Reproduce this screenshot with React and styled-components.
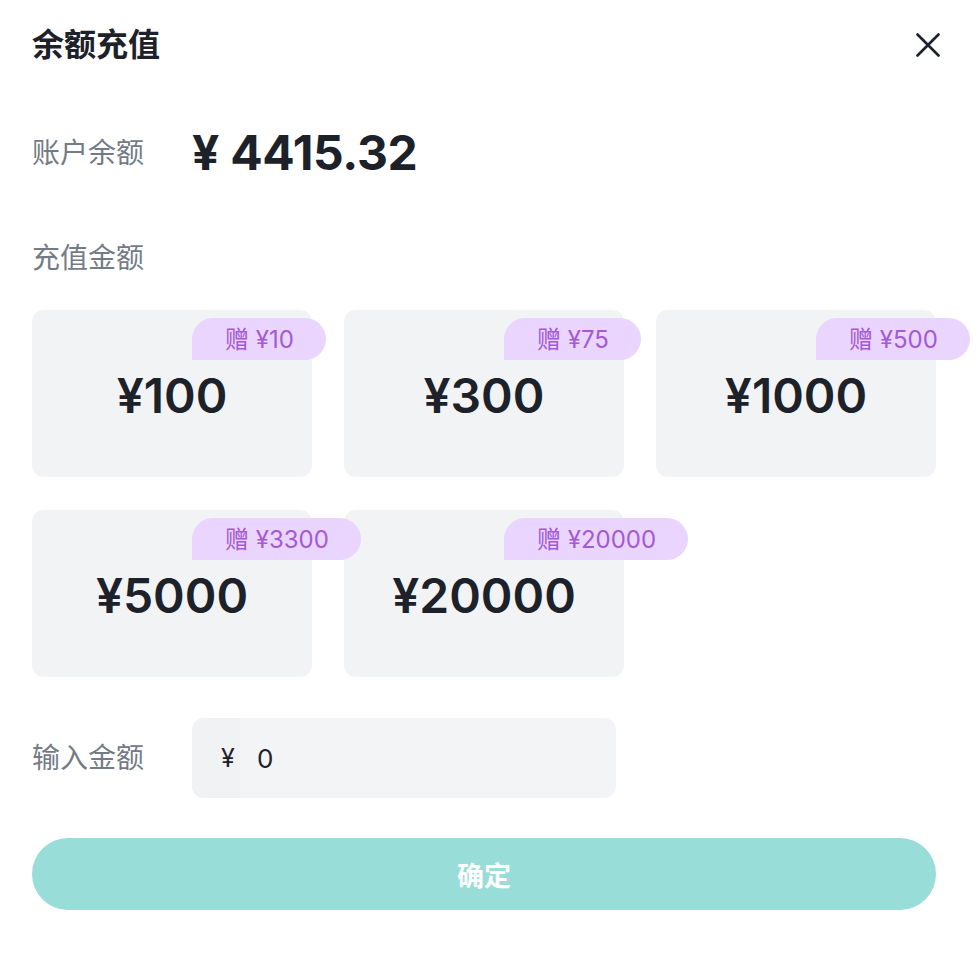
import React from "react";
import styled, { createGlobalStyle } from "styled-components";

const Global = createGlobalStyle`
  html, body { margin: 0; padding: 0; background: #ffffff; }
  body { font-family: Inter, "Noto Sans CJK SC", sans-serif; color: #1d2129; }
`;

const Dialog = styled.div`
  width: 978px;
  box-sizing: border-box;
  padding: 24px 42px 52px 32px;
  display: flex;
  flex-direction: column;
`;

const Header = styled.div`
  display: flex;
  align-items: center;
  justify-content: space-between;
  height: 42px;
`;

const Title = styled.h1`
  margin: 0;
  font-size: 32px;
  line-height: 42px;
  font-weight: 700;
  color: #1d2129;
`;

const CloseButton = styled.button`
  border: 0;
  background: none;
  padding: 0;
  width: 24px;
  height: 24px;
  margin-right: -4px;
  display: flex;
  cursor: pointer;
`;

const Row = styled.div`
  display: flex;
  align-items: center;
  margin-top: ${(p) => p.$mt}px;
  height: ${(p) => p.$h}px;
`;

const Label = styled.div`
  width: 160px;
  flex: none;
  font-size: 28px;
  line-height: 40px;
  color: #737b87;
`;

const Balance = styled.div`
  font-size: 48px;
  font-weight: 700;
  line-height: 60px;
  color: #1d2129;
  letter-spacing: -0.3px;
`;

const SectionLabel = styled(Label)`
  margin-top: 55px;
`;

const Grid = styled.div`
  display: grid;
  grid-template-columns: repeat(3, 280px);
  grid-auto-rows: 167px;
  column-gap: 32px;
  row-gap: 33px;
  margin-top: 32px;
`;

const Card = styled.div`
  position: relative;
  background: #f2f3f5;
  border-radius: 12px;
  display: flex;
  align-items: center;
  justify-content: center;
  padding-top: 4px;
  box-sizing: border-box;
`;

const Amount = styled.div`
  font-size: 48px;
  font-weight: 600;
  color: #1d2129;
`;

const Badge = styled.div`
  position: absolute;
  z-index: 1;
  left: 160px;
  top: 8px;
  height: 42px;
  padding: 2px 32px 0 33px;
  box-sizing: border-box;
  background: #ead5fe;
  color: #a35ad4;
  font-size: 24px;
  line-height: 40px;
  white-space: nowrap;
  border-radius: 21px 21px 21px 0;
`;

const InputBox = styled.div`
  width: 424px;
  height: 80px;
  display: flex;
  border-radius: 12px;
  overflow: hidden;
  background: #f3f4f6;
`;

const Prefix = styled.div`
  width: 48px;
  flex: none;
  box-sizing: border-box;
  padding-left: 29px;
  display: flex;
  align-items: center;
  font-size: 25px;
  color: #1d2129;
  background: #f1f2f4;
`;

const AmountInput = styled.input`
  flex: 1;
  min-width: 0;
  border: 0;
  outline: none;
  background: transparent;
  padding: 0 0 0 17px;
  font-family: Inter, "Noto Sans CJK SC", sans-serif;
  font-size: 26px;
  color: #1d2129;
`;

const Confirm = styled.button`
  margin-top: 40px;
  height: 72px;
  width: 904px;
  border: 0;
  border-radius: 36px;
  background: #99ddd8;
  color: #ffffff;
  font-family: Inter, "Noto Sans CJK SC", sans-serif;
  font-size: 27px;
  font-weight: 700;
  cursor: pointer;
`;

const options = [
  { amount: "¥100", bonus: "赠 ¥10" },
  { amount: "¥300", bonus: "赠 ¥75" },
  { amount: "¥1000", bonus: "赠 ¥500" },
  { amount: "¥5000", bonus: "赠 ¥3300" },
  { amount: "¥20000", bonus: "赠 ¥20000" },
];

export default function App() {
  return (
    <>
      <Global />
      <Dialog>
        <Header>
          <Title>余额充值</Title>
          <CloseButton aria-label="close">
            <svg width="24" height="24" viewBox="0 0 24 24">
              <path d="M1.5 1.5 L22.5 22.5 M22.5 1.5 L1.5 22.5" stroke="#1d2129" strokeWidth="2.6" strokeLinecap="round" fill="none" />
            </svg>
          </CloseButton>
        </Header>
        <Row $mt={57} $h={60}>
          <Label>账户余额</Label>
          <Balance>¥ 4415.32</Balance>
        </Row>
        <SectionLabel>充值金额</SectionLabel>
        <Grid>
          {options.map((o) => (
            <Card key={o.amount}>
              <Amount>{o.amount}</Amount>
              <Badge>{o.bonus}</Badge>
            </Card>
          ))}
        </Grid>
        <Row $mt={41} $h={80}>
          <Label>输入金额</Label>
          <InputBox>
            <Prefix>¥</Prefix>
            <AmountInput defaultValue="0" />
          </InputBox>
        </Row>
        <Confirm>确定</Confirm>
      </Dialog>
    </>
  );
}
